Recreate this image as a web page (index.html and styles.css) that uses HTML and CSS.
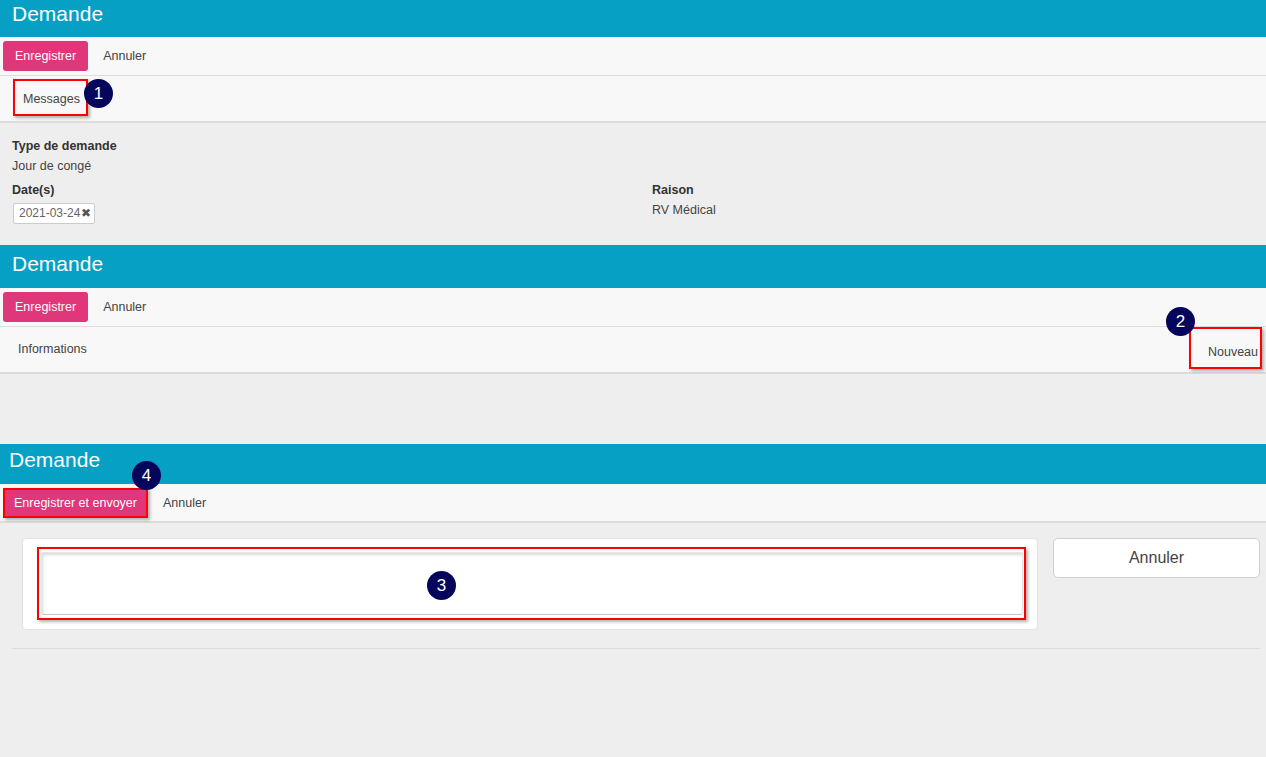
FILE: index.html
```html
<!DOCTYPE html>
<html lang="fr">
<head>
  <meta charset="UTF-8">
  <title>Demande</title>
  <link rel="stylesheet" href="styles.css">
</head>
<body>

  <!-- Capture 1 : onglet Messages -->
  <div class="screen">
    <div class="header">Demande</div>
    <div class="toolbar">
      <button class="btn-primary">Enregistrer</button>
      <button class="btn-link">Annuler</button>
    </div>
    <div class="tabs">
      <span class="tab tab-messages callout">Messages</span>
      <span class="badge badge-1">1</span>
    </div>
    <div class="details">
      <div class="field-col">
        <div class="label">Type de demande</div>
        <div class="value">Jour de congé</div>
        <div class="label">Date(s)</div>
        <span class="chip">2021-03-24<span class="chip-x">&#10006;</span></span>
      </div>
      <div class="field-col col-right">
        <div class="label">Raison</div>
        <div class="value">RV Médical</div>
      </div>
    </div>
  </div>

  <!-- Capture 2 : bouton Nouveau -->
  <div class="screen">
    <div class="header header-2">Demande</div>
    <div class="toolbar">
      <button class="btn-primary">Enregistrer</button>
      <button class="btn-link">Annuler</button>
    </div>
    <div class="tabs tabs-2">
      <span class="tab tab-info">Informations</span>
      <span class="tab tab-new callout">Nouveau</span>
      <span class="badge badge-2">2</span>
    </div>
    <div class="spacer"></div>
  </div>

  <!-- Capture 3 : message -->
  <div class="screen">
    <div class="header header-3">Demande</div>
    <div class="toolbar toolbar-3">
      <button class="btn-primary btn-send callout">Enregistrer et envoyer</button>
      <button class="btn-link">Annuler</button>
      <span class="badge badge-4">4</span>
    </div>
    <div class="compose">
      <div class="compose-row">
        <div class="card">
          <div class="input-wrap callout">
            <div class="input"></div>
          </div>
          <span class="badge badge-3">3</span>
        </div>
        <button class="btn-cancel">Annuler</button>
      </div>
      <div class="rule"></div>
    </div>
  </div>

</body>
</html>
```

FILE: styles.css
```css
/* Basic Styles */
* {
  margin: 0;
  padding: 0;
  box-sizing: border-box;
  font-family: 'Liberation Sans', Arial, sans-serif;
}

body {
  width: 1266px;
  height: 757px;
  overflow: hidden;
  background-color: #eeeeee;
  color: #333;
  font-size: 12.5px;
}

.screen {
  position: relative;
}

.header {
  height: 37px;
  background-color: #05a0c4;
  color: white;
  font-size: 21px;
  line-height: 27px;
  padding-left: 12px;
}

.header-2 {
  height: 43px;
  line-height: 38px;
}

.header-3 {
  height: 40px;
  line-height: 32px;
  padding-left: 9px;
}

.toolbar {
  position: relative;
  height: 39px;
  background-color: #f8f8f8;
  border-bottom: 1px solid #dddddd;
  display: flex;
  align-items: flex-start;
  padding: 4px 3px 0;
}

.toolbar-3 {
  border-bottom: 2px solid #dcdcdc;
}

.btn-primary {
  height: 30px;
  padding: 0 12px;
  background-color: #e0367a;
  color: white;
  border: none;
  border-radius: 3px;
  font-size: 12.5px;
}

.btn-link {
  height: 30px;
  padding: 0 15px;
  background: none;
  border: none;
  color: #444;
  font-size: 12.5px;
}

.btn-send {
  padding: 0 9px;
  border-radius: 0;
}

.tabs {
  position: relative;
  height: 47px;
  background-color: #f8f8f8;
  border-bottom: 2px solid #dcdcdc;
  display: flex;
  align-items: flex-start;
  padding: 3px 0 0 13px;
}

.tab {
  color: #444;
  font-size: 12.5px;
}

.tab-messages {
  height: 37px;
  line-height: 36px;
  padding: 0 6px 0 8px;
}

.tabs-2 {
  padding: 0 4px 0 18px;
  justify-content: space-between;
}

.tab-info {
  line-height: 44px;
}

.tab-new {
  height: 42px;
  line-height: 46px;
  padding: 0 2px 0 17px;
}

/* annotations */
.callout {
  border: 2px solid #ff0000;
  box-shadow: 2px 2px 3px rgba(0, 0, 0, 0.3);
}

.badge {
  position: absolute;
  width: 29px;
  height: 29px;
  border-radius: 50%;
  background-color: #05055c;
  color: white;
  font-size: 17px;
  line-height: 29px;
  text-align: center;
}

.badge-1 { left: 84px; top: 3px; }
.badge-2 { left: 1166px; top: -20px; }
.badge-3 { left: 404px; top: 32px; }
.badge-4 { left: 132px; top: -23px; }

.details {
  height: 122px;
  display: flex;
  padding: 13px 0 0 12px;
}

.field-col {
  width: 640px;
  flex-shrink: 0;
}

.col-right {
  width: auto;
  padding-top: 44px;
}

.label {
  font-weight: bold;
  color: #333;
  line-height: 20px;
}

.value {
  line-height: 20px;
  margin-bottom: 4px;
  color: #444;
}

.chip {
  display: inline-block;
  margin-top: 3px;
  margin-left: 1px;
  height: 21px;
  line-height: 19px;
  padding: 0 3px 0 5px;
  background: white;
  border: 1px solid #cccccc;
  border-radius: 2px;
  color: #666;
  font-size: 12px;
}

.chip-x {
  font-size: 12px;
  color: #555;
  margin-left: 1px;
}

.spacer {
  height: 70px;
}

.compose {
  padding: 15px 6px 0 12px;
}

.compose-row {
  display: flex;
  align-items: flex-start;
  gap: 15px;
  padding-left: 10px;
}

.card {
  position: relative;
  width: 1016px;
  height: 92px;
  background: white;
  border: 1px solid #e2e2e2;
  border-radius: 4px;
  padding: 8px 11px 0 14px;
}

.input-wrap {
  padding: 3px 1px 3px 2px;
  background: white;
}

.input {
  height: 63px;
  border: 1px solid #e6e6e6;
  border-bottom-color: #c4c4c4;
  border-radius: 2px;
  box-shadow: inset 1px 2px 3px rgba(0, 0, 0, 0.15);
}

.btn-cancel {
  width: 207px;
  height: 40px;
  background: white;
  border: 1px solid #cfcfcf;
  border-radius: 5px;
  color: #444;
  font-size: 16px;
}

.rule {
  margin-top: 18px;
  border-top: 1px solid #dcdcdc;
}
```
